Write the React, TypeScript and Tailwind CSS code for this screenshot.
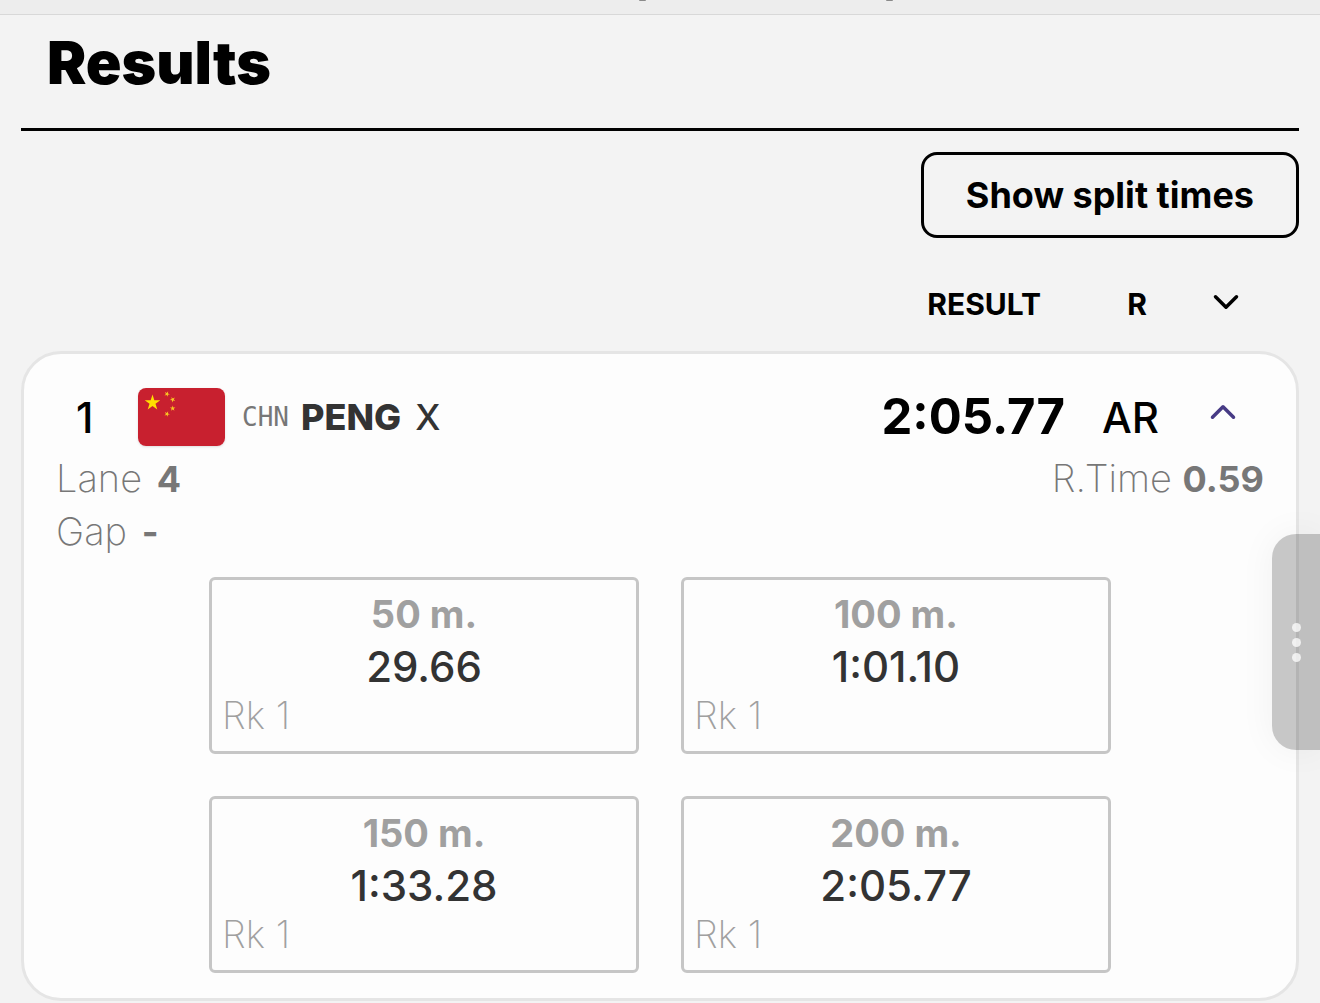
import React from 'react';
import { ChevronDown, ChevronUp } from 'lucide-react';

const splits = [
  { distance: '50 m.', time: '29.66', rank: 1 },
  { distance: '100 m.', time: '1:01.10', rank: 1 },
  { distance: '150 m.', time: '1:33.28', rank: 1 },
  { distance: '200 m.', time: '2:05.77', rank: 1 },
];

const STAR = 'M0 -1L0.2245 -0.309L0.951 -0.309L0.3633 0.118L0.5878 0.809L0 0.382L-0.5878 0.809L-0.3633 0.118L-0.951 -0.309L-0.2245 -0.309Z';

const ChinaFlag = () => (
  <svg viewBox="0 0 87 58" className="w-[87px] h-[58px] shrink-0 rounded-lg shadow-sm" role="img" aria-label="China">
    <rect width="87" height="58" fill="#c8202f" />
    <g fill="#ffde00">
      <path d={STAR} transform="translate(14.5 14.8) scale(8.2)" />
    </g>
    <g fill="#f9c623">
      <path d={STAR} transform="translate(29 6) rotate(23) scale(2.9)" />
      <path d={STAR} transform="translate(34.7 11.6) rotate(46) scale(2.9)" />
      <path d={STAR} transform="translate(34.7 20.3) rotate(0) scale(2.9)" />
      <path d={STAR} transform="translate(29 26) rotate(23) scale(2.9)" />
    </g>
  </svg>
);

const App = () => {
  return (
    <div className="relative min-h-screen bg-[#f3f3f3] font-['Inter',sans-serif] text-black">
      {/* Browser bar */}
      <div className="flex justify-center gap-[240px] h-[15px] pl-[212px] bg-[#ededed] border-b border-[#d8d8d8]">
        <span className="w-[7px] h-px rounded-b-full bg-[#8a8a8a]" />
        <span className="w-[7px] h-px rounded-b-full bg-[#8a8a8a]" />
      </div>

      <main className="px-[21px]">
        <h1 className="px-[26px] pt-2 pb-[25px] text-[59px] leading-[80px] font-black border-b-3 border-black">
          Results
        </h1>

        <div className="flex justify-end mt-[21px]">
          <button className="px-[42px] h-[86px] rounded-2xl border-3 border-black text-[36px] font-bold">
            Show split times
          </button>
        </div>

        {/* Column headings */}
        <div className="flex items-center justify-end h-12 mt-[42px] mb-[23px] pr-[52px] text-[30px] font-bold">
          <span>RESULT</span>
          <span className="w-[106px] text-right">R</span>
          <button aria-label="Expand all" className="flex justify-end w-[100px] pb-1">
            <ChevronDown size={42} strokeWidth={2} />
          </button>
        </div>

        {/* Athlete card */}
        <article className="pt-[34px] pb-[25px] rounded-[40px] border-3 border-[#e5e5e5] bg-[#fdfdfd]">
          <div className="flex items-center h-[58px] px-[52px]">
            <span className="w-[62px] text-[42px] font-medium">1</span>
            <ChinaFlag />
            <abbr title="China" className="ml-[17px] font-['DejaVu_Sans_Mono',monospace] text-[26px] text-[#777777] no-underline">
              CHN
            </abbr>
            <h2 className="ml-3 text-[36px] text-[#333333]">
              <span className="font-extrabold">PENG</span> <span className="ml-1 font-medium">X</span>
            </h2>
            <span className="ml-auto text-[49px] font-bold">2:05.77</span>
            <span className="w-[94px] text-right text-[42px] font-medium">AR</span>
            <button aria-label="Hide split times" className="flex justify-end w-[85px] pb-[10px] text-[#473b85]">
              <ChevronUp size={42} strokeWidth={2} />
            </button>
          </div>

          <div className="flex justify-between mt-[6px] px-8 text-[38px] leading-[52px] font-extralight text-[#777777]">
            <div>
              <p>Lane <span className="ml-1 text-[36px] font-bold">4</span></p>
              <p>Gap <span className="ml-1 text-[36px] font-bold">-</span></p>
            </div>
            <p>R.Time <span className="text-[36px] font-bold">0.59</span></p>
          </div>

          <div className="grid grid-cols-2 gap-[42px] mt-[19px] px-[185px]">
            {splits.map((split) => (
              <section key={split.distance} className="pt-2 pb-[14px] px-[10px] rounded-md border-3 border-[#c6c6c6]">
                <h3 className="text-center text-[38px] leading-[52px] font-bold text-[#a0a0a0]">{split.distance}</h3>
                <p className="text-center text-[42px] leading-[53px] font-medium text-[#333333]">{split.time}</p>
                <p className="text-[38px] leading-[44px] font-extralight text-[#a0a0a0]">Rk {split.rank}</p>
              </section>
            ))}
          </div>
        </article>
      </main>

      {/* Edge handle */}
      <button
        aria-label="Open side panel"
        className="absolute right-0 top-[534px] flex flex-col items-center justify-center gap-[6px] w-12 h-[216px] rounded-l-3xl bg-black/21 shadow-[0_0_36px_rgba(0,0,0,0.05)]"
      >
        <span className="size-[9px] rounded-full bg-white/75" />
        <span className="size-[9px] rounded-full bg-white/75" />
        <span className="size-[9px] rounded-full bg-white/75" />
      </button>
    </div>
  );
};

export default App;
